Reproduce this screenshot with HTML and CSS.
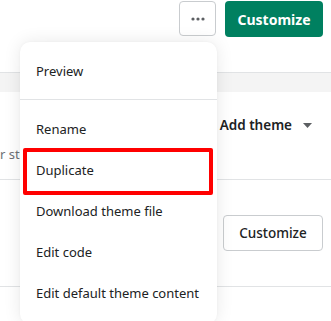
FILE: index.html
```html
<!DOCTYPE html>
<html lang="en">
<head>
    <meta charset="UTF-8">
    <meta name="viewport" content="width=device-width, initial-scale=1.0">
    <title>Themes</title>
    <link rel="stylesheet" href="styles.css">
</head>
<body>
    <div class="page">
        <div class="topbar">
            <button class="more-button" aria-label="More actions">
                <svg width="14" height="4" viewBox="0 0 14 4">
                    <circle cx="2" cy="2" r="1.6"></circle>
                    <circle cx="7" cy="2" r="1.6"></circle>
                    <circle cx="12" cy="2" r="1.6"></circle>
                </svg>
            </button>
            <button class="primary-button">Customize</button>
        </div>

        <div class="band"></div>

        <div class="theme-row first-row">
            <p class="theme-note">r store</p>
            <button class="add-theme">
                Add theme
                <svg width="9" height="5" viewBox="0 0 9 5"><path d="M0 0h9L4.5 5z"></path></svg>
            </button>
        </div>

        <div class="theme-row second-row">
            <button class="outline-button">Customize</button>
        </div>

        <div class="theme-row last-row"></div>

        <!-- actions popover -->
        <div class="menu">
            <ul class="menu-section">
                <li>Preview</li>
            </ul>
            <ul class="menu-section">
                <li>Rename</li>
                <li>Duplicate</li>
                <li>Download theme file</li>
                <li>Edit code</li>
                <li>Edit default theme content</li>
            </ul>
        </div>

        <div class="highlight"></div>
    </div>
</body>
</html>
```

FILE: styles.css
```css
* {
    margin: 0;
    padding: 0;
    box-sizing: border-box;
}

body {
    font-family: 'Noto Sans', 'Open Sans', sans-serif;
    font-size: 13px;
    color: #202223;
    background-color: #fff;
    overflow: hidden;
}

.page {
    position: relative;
    width: 331px;
    height: 321px;
}

button {
    font-family: inherit;
    cursor: pointer;
}

.topbar {
    display: flex;
    justify-content: flex-end;
    gap: 9px;
    height: 72px;
    padding: 1px 8px 0 0;
}

.more-button {
    width: 37px;
    height: 35px;
    background: #fff;
    border: 1px solid #c9cccf;
    border-radius: 4px;
    display: flex;
    justify-content: center;
    align-items: center;
}

.more-button svg {
    fill: #5c5f62;
}

.primary-button {
    width: 98px;
    height: 36px;
    background-color: #008060;
    color: #fff;
    border: none;
    border-radius: 4px;
    font-size: 14px;
    font-weight: 700;
}

.band {
    height: 20px;
    background-color: #f4f4f4;
    border-top: 1px solid #e1e3e5;
}

.theme-row {
    display: flex;
    justify-content: space-between;
    border-bottom: 1px solid #e1e3e5;
}

.first-row {
    height: 88px;
    padding-right: 19px;
}

.theme-note {
    align-self: flex-end;
    margin-bottom: 16px;
    color: #6d7175;
}

.add-theme {
    align-self: flex-start;
    margin-top: 24px;
    display: flex;
    align-items: center;
    gap: 11px;
    background: none;
    border: none;
    font-size: 13.5px;
    font-weight: 600;
    color: #202223;
}

.add-theme svg {
    fill: #5c5f62;
}

.second-row {
    height: 107px;
    justify-content: flex-end;
    align-items: center;
    padding-right: 8px;
}

.outline-button {
    width: 100px;
    height: 36px;
    background: #fff;
    border: 1px solid #c9cccf;
    border-radius: 4px;
    font-size: 13.5px;
    font-weight: 500;
    color: #202223;
}

.last-row {
    border-bottom: none;
}

.menu {
    position: absolute;
    left: 20px;
    top: 42px;
    width: 197px;
    height: 282px;
    background: #fff;
    border-radius: 10px;
    box-shadow: 0 0 18px rgba(0, 0, 0, 0.09), 0 0 3px rgba(0, 0, 0, 0.04);
}

.menu-section {
    list-style: none;
    padding: 9px 0 7px;
}

.menu-section + .menu-section {
    border-top: 1px solid #e1e3e5;
}

.menu-section li {
    height: 41px;
    line-height: 41px;
    padding-left: 16px;
    white-space: nowrap;
}

.highlight {
    position: absolute;
    left: 23px;
    top: 148px;
    width: 190px;
    height: 47px;
    border: 4px solid #f00;
    border-radius: 2px;
}
```
